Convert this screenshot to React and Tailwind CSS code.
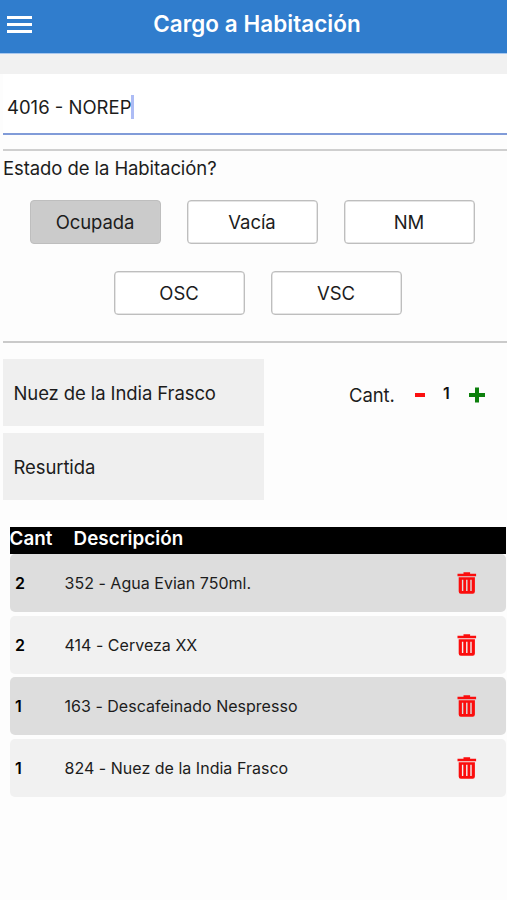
const items = [
  { qty: 2, name: '352 - Agua Evian 750ml.' },
  { qty: 2, name: '414 - Cerveza XX' },
  { qty: 1, name: '163 - Descafeinado Nespresso' },
  { qty: 1, name: '824 - Nuez de la India Frasco' },
];

function TrashIcon() {
  return (
    <svg width="20" height="24" viewBox="0 0 20 24" fill="none" aria-hidden="true">
      <path d="M0.5 2.7h6V1.2h6.6v1.5h6v2.6H0.5z" fill="#fb0d0d" />
      <path
        fillRule="evenodd"
        d="M1.7 6.2h16.2v14.4a2.2 2.2 0 0 1-2.2 2.2H3.9a2.2 2.2 0 0 1-2.2-2.2zM4.9 8.7v11.4h1.4V8.7zM9.1 8.7v11.4h1.4V8.7zM13.3 8.7v11.4h1.4V8.7z"
        fill="#fb0d0d"
      />
    </svg>
  );
}

function StateButton({ children, active }) {
  return (
    <button
      className={`flex h-11 w-[131px] items-center justify-center rounded-[4px] border border-[#bebebe] shadow-[inset_0_0_0_0.5px_#cccccc] ${
        active ? 'bg-[#cbcbcb]' : 'bg-white'
      }`}
    >
      {children}
    </button>
  );
}

export default function App() {
  return (
    <div className="h-[900px] w-[507px] overflow-hidden bg-[#fdfdfd] font-['Inter',sans-serif] text-[18.5px] leading-6 text-[#1c1c1c]">
      <header className="flex h-[54px] items-center border-b border-[#a9c8ee] bg-[#307dcd] pl-[7px] pb-1.5">
        <div className="flex w-[25px] flex-col gap-1 pt-px">
          <span className="h-[3px] bg-white" />
          <span className="h-[3px] bg-white" />
          <span className="h-[3px] bg-white" />
        </div>
        <h1 className="grow pt-px pr-[25px] text-center text-[22.4px] font-semibold tracking-[0.08px] text-white">
          Cargo a Habitación
        </h1>
      </header>
      <div className="h-5 bg-[#f1f1f1]" />

      <div className="ml-[3px] flex h-[61px] items-center border-b-2 border-[#809bd8] bg-white pt-1.5 pl-1">
        <span>4016 - NOREP</span>
        <span className="h-6 w-[3px] bg-[#adbcf5]" />
      </div>
      <section className="mt-3.5 ml-[3px] h-[194px] border-y-2 border-t-[#cfcfcf] border-b-[#cacaca] pt-[5px]">
        <h2 className="tracking-[-0.08px]">Estado de la Habitación?</h2>
        <div className="mt-5 ml-[26.5px] flex gap-[26px] tracking-[-0.08px]">
          <StateButton active>Ocupada</StateButton>
          <StateButton>Vacía</StateButton>
          <StateButton>NM</StateButton>
        </div>
        <div className="mt-[27px] ml-[110.5px] flex gap-[26px] tracking-[-0.08px]">
          <StateButton>OSC</StateButton>
          <StateButton>VSC</StateButton>
        </div>
      </section>

      <section className="mt-4 ml-[3px] flex flex-col gap-[7px] tracking-[-0.1px]">
        <div className="flex h-[67px] items-center">
          <div className="flex h-full w-[261px] items-center bg-[#efefef] pl-[10.5px]">Nuez de la India Frasco</div>
          <div className="ml-[85px] flex h-full items-center pt-1">
            <span className="w-[66px]">Cant.</span>
            <span className="h-1 w-[10px] bg-[#fb1010]" />
            <span className="ml-[18px] w-[26px] pb-1 text-[16px] font-semibold text-[#111]">1</span>
            <svg width="16" height="16" viewBox="0 0 16 16" aria-hidden="true">
              <path d="M8 0.5v15M0 8h16" stroke="#0d800d" strokeWidth="4" />
            </svg>
          </div>
        </div>
        <div className="flex h-[67px] w-[261px] items-center bg-[#efefef] pl-[10.5px]">Resurtida</div>
      </section>

      <section className="mt-[27px] ml-[9.5px] w-[496.5px]">
        <div className="flex h-[27px] items-center bg-black pb-1 text-[18.8px] font-semibold tracking-[0.08px] text-white">
          <span className="w-16">Cant</span>
          <span>Descripción</span>
        </div>
        <div className="flex flex-col gap-[3.5px]">
          {items.map((item, i) => (
            <div
              key={item.name}
              className={`flex h-[58.1px] items-center rounded-[5px] pl-[5.5px] text-[16px] ${
                i % 2 ? 'bg-[#f1f1f1]' : 'bg-[#dddddd]'
              }`}
            >
              <span className="w-[49.5px] font-semibold text-black">{item.qty}</span>
              <span className="grow tracking-[0.02px]">{item.name}</span>
              <span className="pr-[29px]">
                <TrashIcon />
              </span>
            </div>
          ))}
        </div>
      </section>
    </div>
  );
}
